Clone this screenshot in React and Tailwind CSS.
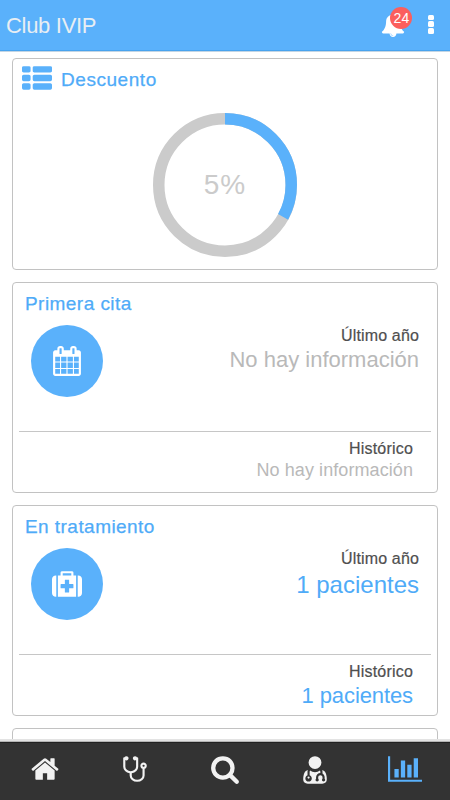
import React from 'react';

const ICONS = {
    list: 'M512 1248v192q0 40-28 68t-68 28h-320q-40 0-68-28t-28-68v-192q0-40 28-68t68-28h320q40 0 68 28t28 68zm0-512v192q0 40-28 68t-68 28h-320q-40 0-68-28t-28-68v-192q0-40 28-68t68-28h320q40 0 68 28t28 68zm1280 512v192q0 40-28 68t-68 28h-960q-40 0-68-28t-28-68v-192q0-40 28-68t68-28h960q40 0 68 28t28 68zm-1280-1024v192q0 40-28 68t-68 28h-320q-40 0-68-28t-28-68v-192q0-40 28-68t68-28h320q40 0 68 28t28 68zm1280 512v192q0 40-28 68t-68 28h-960q-40 0-68-28t-28-68v-192q0-40 28-68t68-28h960q40 0 68 28t28 68zm0-512v192q0 40-28 68t-68 28h-960q-40 0-68-28t-28-68v-192q0-40 28-68t68-28h960q40 0 68 28t28 68z',
    bell: 'M912 1696q0-16-16-16-59 0-101.5-42.5t-42.5-101.5q0-16-16-16t-16 16q0 73 51.5 124.5t124.5 51.5q16 0 16-16zm816-288q0 52-38 90t-90 38h-448q0 106-75 181t-181 75-181-75-75-181h-448q-52 0-90-38t-38-90q50-42 91-88t85-119.5 74.5-158.5 50-206 19.5-260q0-152 117-282.5t307-158.5q-8-19-8-39 0-40 28-68t68-28 68 28 28 68q0 20-8 39 190 28 307 158.5t117 282.5q0 139 19.5 260t50 206 74.5 158.5 85 119.5 91 88z',
    calendar: 'M192 1664h288v-288h-288v288zm352 0h320v-288h-320v288zm-352-352h288v-320h-288v320zm352 0h320v-320h-320v320zm-352-384h288v-288h-288v288zm736 736h320v-288h-320v288zm-384-736h320v-288h-320v288zm768 736h288v-288h-288v288zm-384-352h320v-320h-320v320zm-352-864v-288q0-13-9.5-22.5t-22.5-9.5h-64q-13 0-22.5 9.5t-9.5 22.5v288q0 13 9.5 22.5t22.5 9.5h64q13 0 22.5-9.5t9.5-22.5zm736 864h288v-320h-288v320zm-384-384h320v-288h-320v288zm384 0h288v-288h-288v288zm32-480v-288q0-13-9.5-22.5t-22.5-9.5h-64q-13 0-22.5 9.5t-9.5 22.5v288q0 13 9.5 22.5t22.5 9.5h64q13 0 22.5-9.5t9.5-22.5zm384-64v1280q0 52-38 90t-90 38h-1408q-52 0-90-38t-38-90v-1280q0-52 38-90t90-38h128v-96q0-66 47-113t113-47h64q66 0 113 47t47 113v96h384v-96q0-66 47-113t113-47h64q66 0 113 47t47 113v96h128q52 0 90 38t38 90z',
    medkit: 'M1280 1120v-192q0-14-9-23t-23-9h-224v-224q0-14-9-23t-23-9h-192q-14 0-23 9t-9 23v224h-224q-14 0-23 9t-9 23v192q0 14 9 23t23 9h224v224q0 14 9 23t23 9h192q14 0 23-9t9-23v-224h224q14 0 23-9t9-23zm-640-736h512v-128h-512v128zm-384 0v1280h-32q-92 0-158-66t-66-158v-832q0-92 66-158t158-66h32zm1184 0v1280h-1088v-1280h160v-160q0-40 28-68t68-28h576q40 0 68 28t28 68v160h160zm352 224v832q0 92-66 158t-158 66h-32v-1280h32q92 0 158 66t66 158z',
    home: 'M1472 992v480q0 26-19 45t-45 19h-384v-384h-256v384h-384q-26 0-45-19t-19-45v-480q0-1 .5-3t.5-3l575-474 575 474q1 2 1 6zm223-69l-62 74q-8 9-21 11h-3q-13 0-21-7l-692-577-692 577q-12 8-24 7-13-2-21-11l-62-74q-8-10-7-23.5t11-21.5l719-599q32-26 76-26t76 26l244 204v-195q0-14 9-23t23-9h192q14 0 23 9t9 23v408l219 182q10 8 11 21.5t-7 23.5z',
    stethoscope: 'M1472 704q0-26-19-45t-45-19-45 19-19 45 19 45 45 19 45-19 19-45zm128 0q0 62-35.5 111t-92.5 70v395q0 159-131.5 271.5t-316.5 112.5-316.5-112.5-131.5-271.5v-132q-164-21-274-128.5t-110-252.5v-512q0-26 19-45t45-19q6 0 16 2 17-30 47-48t65-18q53 0 90.5 37.5t37.5 90.5-37.5 90.5-90.5 37.5q-33 0-64-18v402q0 106 94 181t226 75 226-75 94-181v-402q-31 18-64 18-53 0-90.5-37.5t-37.5-90.5 37.5-90.5 90.5-37.5q35 0 65 18t47 48q10-2 16-2 26 0 45 19t19 45v512q0 145-110 252.5t-274 128.5v132q0 106 94 181t226 75 226-75 94-181v-395q-57-21-92.5-70t-35.5-111q0-80 56-136t136-56 136 56 56 136z',
    search: 'M1216 832q0-185-131.5-316.5t-316.5-131.5-316.5 131.5-131.5 316.5 131.5 316.5 316.5 131.5 316.5-131.5 131.5-316.5zm512 832q0 52-38 90t-90 38q-54 0-90-38l-343-342q-179 124-399 124-143 0-273.5-55.5t-225-150-150-225-55.5-273.5 55.5-273.5 150-225 225-150 273.5-55.5 273.5 55.5 225 150 150 225 55.5 273.5q0 220-124 399l343 343q37 37 37 90z',
    doctor: 'M576 1408q0 26-19 45t-45 19-45-19-19-45 19-45 45-19 45 19 19 45zm1024 109q0 121-73 190t-194 69h-874q-121 0-194-69t-73-190q0-68 5.5-131t24-138 47.5-132.5 81-103 120-60.5q-22 52-22 120v203q-58 20-93 70t-35 111q0 80 56 136t136 56 136-56 56-136q0-61-35.5-111t-92.5-70v-203q0-62 25-93 132 104 295 104t295-104q25 31 25 93v64q-106 0-181 75t-75 181v89q-32 29-32 71 0 40 28 68t68 28 68-28 28-68q0-42-32-71v-89q0-52 38-90t90-38 90 38 38 90v89q-32 29-32 71 0 40 28 68t68 28 68-28 28-68q0-42-32-71v-89q0-68-34.5-127.5t-93.5-93.5q0-10 .5-42.5t0-48-2.5-41.5-7-47-13-40q68 15 120 60.5t81 103 47.5 132.5 24 138 5.5 131zm-320-1005q0 159-112.5 271.5t-271.5 112.5-271.5-112.5-112.5-271.5 112.5-271.5 271.5-112.5 271.5 112.5 112.5 271.5z',
    chart: 'M640 896v512h-256v-512h256zm384-512v1024h-256v-1024h256zm1024 1152v128h-2048v-1536h128v1408h1920zm-640-896v768h-256v-768h256zm384-384v1152h-256v-1152h256z',
};

function Icon({ name, className, width = 1792 }) {
    return (
        <svg viewBox={`0 0 ${width} 1792`} fill="currentColor" className={className}>
            <path d={ICONS[name]} />
        </svg>
    );
}

function Donut({ percent, label }) {
    return (
        <div className="grid place-items-center">
            <svg viewBox="0 0 144 144" className="col-start-1 row-start-1 size-36 -rotate-90">
                <circle cx="72" cy="72" r="66.25" fill="none" stroke="#cbcbcb" strokeWidth="11.5" />
                <circle
                    cx="72"
                    cy="72"
                    r="66.25"
                    fill="none"
                    stroke="#5ab1fb"
                    strokeWidth="11.5"
                    pathLength="100"
                    strokeDasharray={`${percent} 100`}
                />
            </svg>
            <span className="col-start-1 row-start-1 text-[28px] leading-8 tracking-[1px] text-[#cbcbcb]">{label}</span>
        </div>
    );
}

function StatCard({ title, icon, lastYear, total }) {
    const empty = 'No hay información';

    return (
        <section className="flex h-[211px] shrink-0 flex-col rounded-[4px] border border-[#c2c2c2] px-1.5">
            <h2 className="mt-[11px] pl-1.5 text-[19px] leading-5 tracking-[0.45px] text-[#4fabf8] [-webkit-text-stroke:0.25px]">{title}</h2>
            <div className="box-content flex h-[106px] justify-between border-b border-[#c6c6c6] px-3 pt-[11px]">
                <div className="flex size-[72px] items-center justify-center rounded-full bg-[#5ab1fb] text-white">
                    <Icon name={icon} className="size-[30px]" />
                </div>
                <div className="flex flex-col items-end">
                    <span className="mt-[3px] text-base leading-4 tracking-[0.15px] text-[#4f4f4f] [-webkit-text-stroke:0.2px]">Último año</span>
                    {lastYear
                        ? <span className="mt-1 text-2xl leading-7 text-[#4fabf8]">{lastYear}</span>
                        : <span className="mt-1 text-[22px] leading-6 text-[#b9b9b9]">{empty}</span>}
                </div>
            </div>
            <div className="flex flex-col items-end pr-[18px] pt-[9px]">
                <span className="text-base leading-4 tracking-[0.2px] text-[#4f4f4f] [-webkit-text-stroke:0.2px]">Histórico</span>
                {total
                    ? <span className="mt-1 text-[22px] leading-6 tracking-[-0.1px] text-[#4fabf8]">{total}</span>
                    : <span className="mt-[3px] text-lg leading-5 tracking-[0.08px] text-[#b9b9b9]">{empty}</span>}
            </div>
        </section>
    );
}

function BottomNav() {
    const items = ['home', 'stethoscope', 'search', 'doctor'];

    return (
        <nav className="grid h-[58px] shrink-0 grid-cols-5 justify-items-center border-t border-[#222] bg-[#333] pt-[11px] text-[#f2f2f2] shadow-[0_-1px_0_#b5b5b5,0_-3px_0_#e3e3e3]">
            {items.map((name) => (
                <Icon key={name} name={name} className="size-[30px]" />
            ))}
            <Icon name="chart" width={2048} className="h-[30px] w-[34.3px] text-[#5ab1fb]" />
        </nav>
    );
}

export default function App() {
    return (
        <div className="flex h-[800px] w-[450px] flex-col overflow-hidden bg-white font-['Liberation_Sans',Arial,sans-serif]">
            <header className="flex h-[52px] shrink-0 items-start justify-between border-b border-[#c3d5e4] bg-[#5ab1fb] pl-1.5 pr-4 shadow-[inset_0_-1px_0_#48a3ee]">
                <h1 className="mt-3 text-[22px] leading-7 tracking-[-0.3px] text-[#e8eef3]">Club IVIP</h1>
                <div className="flex">
                    <div className="relative mt-[13px] text-white">
                        <Icon name="bell" className="size-6" />
                        <span className="absolute -top-[6px] left-[9px] flex size-[22px] items-center justify-center rounded-full bg-[#fb5f5d] text-sm leading-none">
                            24
                        </span>
                    </div>
                    <div className="ml-[23px] mt-[14.5px] flex flex-col gap-[1.2px]">
                        <i className="size-[5.6px] rounded-[1.5px] bg-white" />
                        <i className="size-[5.6px] rounded-[1.5px] bg-white" />
                        <i className="size-[5.6px] rounded-[1.5px] bg-white" />
                    </div>
                </div>
            </header>

            <main className="flex min-h-0 flex-1 flex-col gap-3 overflow-hidden px-3 pt-[6px]">
                <section className="h-[212px] shrink-0 rounded-[4px] border border-[#c2c2c2]">
                    <div className="flex h-[54px] items-start pl-[9px] pt-[5px] text-[#5ab1fb]">
                        <Icon name="list" className="size-[30px]" />
                        <h2 className="ml-[9px] mt-1.5 text-[19px] leading-5 tracking-[0.55px] text-[#4fabf8] [-webkit-text-stroke:0.25px]">Descuento</h2>
                    </div>
                    <Donut percent={33} label="5%" />
                </section>
                <StatCard title="Primera cita" icon="calendar" />
                <StatCard title="En tratamiento" icon="medkit" lastYear="1 pacientes" total="1 pacientes" />
                <section className="h-[211px] shrink-0 rounded-[4px] border border-[#c2c2c2]" />
            </main>

            <BottomNav />
        </div>
    );
}
